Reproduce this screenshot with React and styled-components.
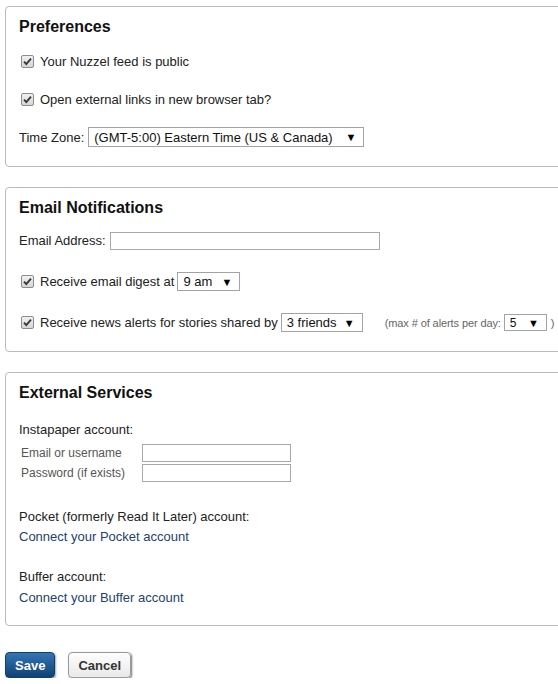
import React from "react";
import styled, { createGlobalStyle } from "styled-components";

const GlobalStyle = createGlobalStyle`
  html, body {
    margin: 0;
    padding: 0;
    overflow: hidden;
    background: #fff;
  }
  body {
    font-family: "Liberation Sans", Arial, sans-serif;
    font-size: 13px;
    color: #222;
  }
`;

const Page = styled.div`
  padding: 6px 0 0 5px;
  width: 570px;
`;

const Panel = styled.section`
  border: 1px solid #bbb;
  border-radius: 4px;
  padding: 10px 13px ${(p) => p.$bottom || 10}px;
  margin-bottom: 20px;
`;

const Heading = styled.h2`
  margin: 0 0 ${(p) => p.$gap || 0}px;
  font-size: 16px;
  line-height: 20px;
  font-weight: bold;
  color: #111;
`;

const Row = styled.div`
  display: flex;
  align-items: center;
  height: ${(p) => p.$h || 38}px;
  margin-top: ${(p) => p.$top || 0}px;
  white-space: nowrap;
`;

const Line = styled.div`
  line-height: 20px;
  margin-top: ${(p) => p.$top || 0}px;
`;

const Link = styled.a`
  display: block;
  line-height: 20px;
  margin-top: ${(p) => p.$top || 0}px;
  color: #24426c;
  text-decoration: none;
  cursor: pointer;
`;

const Box = styled.span`
  display: inline-flex;
  width: 13px;
  height: 13px;
  margin: 0 6px 0 2px;
  flex: none;
`;

const Label = styled.label`
  margin-right: ${(p) => p.$gap ?? 4}px;
`;

const SmallLabel = styled.span`
  display: inline-block;
  width: 121px;
  padding-left: 2px;
  font-size: 12px;
  color: #555;
`;

const Hint = styled.span`
  font-size: 11px;
  letter-spacing: -0.1px;
  color: #666;
  margin: 0 ${(p) => p.$right || 0}px 0 ${(p) => p.$left || 0}px;
`;

const TextInput = styled.input`
  box-sizing: border-box;
  width: ${(p) => p.$w}px;
  height: 18px;
  border: 1px solid #a9a9a9;
  padding: 0 3px;
  font: inherit;
  outline: none;
`;

const SelectBox = styled.span`
  position: relative;
  display: inline-flex;
  align-items: center;
  box-sizing: border-box;
  width: ${(p) => p.$w}px;
  height: ${(p) => p.$h || 20}px;
  border: 1px solid #a3a3a3;
  background: #fff;
  padding-left: 5px;
  font-size: ${(p) => p.$size || 13}px;
  color: #111;
`;

const Arrow = styled.span`
  position: absolute;
  right: 7px;
  top: 50%;
  transform: translateY(-50%);
  font-size: 11px;
  line-height: 1;
  color: #000;
`;

const Buttons = styled.div`
  display: flex;
  gap: 13px;
  padding-top: 6px;
`;

const Button = styled.button`
  box-sizing: border-box;
  height: 26px;
  padding: 0 9px;
  border-radius: 4px;
  font-family: "Liberation Sans", Arial, sans-serif;
  font-size: 13px;
  font-weight: bold;
  cursor: pointer;
  color: ${(p) => (p.$primary ? "#fff" : "#333")};
  border: 1px solid ${(p) => (p.$primary ? "#123e6b" : "#9a9a9a")};
  background: ${(p) =>
    p.$primary
      ? "linear-gradient(#3474b3, #0f4275)"
      : "linear-gradient(#fdfdfd, #e9e9e9)"};
  box-shadow: ${(p) =>
    p.$primary ? "1px 1px 2px rgba(0,0,0,0.35)" : "1px 1px 2px rgba(0,0,0,0.55)"};
`;

function Check() {
  return (
    <Box>
      <svg width="13" height="13" viewBox="0 0 13 13">
        <defs>
          <linearGradient id="cb" x1="0" y1="0" x2="0" y2="1">
            <stop offset="0" stopColor="#f2f2f2" />
            <stop offset="1" stopColor="#d4d4d4" />
          </linearGradient>
        </defs>
        <rect x="0.5" y="0.5" width="12" height="12" rx="1.5" fill="url(#cb)" stroke="#8d8d8d" />
        <path d="M3 6.6 L5.3 9 L10 3.6" fill="none" stroke="#3a3a3a" strokeWidth="1.9" />
      </svg>
    </Box>
  );
}

function Select({ value, w, h, size }) {
  return (
    <SelectBox $w={w} $h={h} $size={size}>
      {value}
      <Arrow>▼</Arrow>
    </SelectBox>
  );
}

export default function App() {
  return (
    <>
      <GlobalStyle />
      <Page>
        <Panel>
          <Heading $gap={5}>Preferences</Heading>
          <Row>
            <Check />
            Your Nuzzel feed is public
          </Row>
          <Row>
            <Check />
            Open external links in new browser tab?
          </Row>
          <Row>
            <Label>Time Zone:</Label>
            <Select value="(GMT-5:00) Eastern Time (US & Canada)" w={276} />
          </Row>
        </Panel>

        <Panel $bottom={8}>
          <Heading $gap={2}>Email Notifications</Heading>
          <Row $h={41}>
            <Label>Email Address:</Label>
            <TextInput $w={270} />
          </Row>
          <Row $h={41}>
            <Check />
            <Label $gap={3}>Receive email digest at</Label>
            <Select value="9 am" w={63} h={19} />
          </Row>
          <Row $h={41}>
            <Check />
            <Label $gap={3}>Receive news alerts for stories shared by</Label>
            <Select value="3 friends" w={82} h={19} />
            <Hint $left={22} $right={3}>(max # of alerts per day:</Hint>
            <Select value="5" w={43} h={17} size={12} />
            <Hint $left={4}>)</Hint>
          </Row>
        </Panel>

        <Panel $bottom={17}>
          <Heading>External Services</Heading>
          <Line $top={17}>Instapaper account:</Line>
          <Row $h={20} $top={3}>
            <SmallLabel>Email or username</SmallLabel>
            <TextInput $w={149} />
          </Row>
          <Row $h={20}>
            <SmallLabel>Password (if exists)</SmallLabel>
            <TextInput $w={149} type="password" />
          </Row>
          <Line $top={24}>Pocket (formerly Read It Later) account:</Line>
          <Link>Connect your Pocket account</Link>
          <Line $top={20}>Buffer account:</Line>
          <Link $top={1}>Connect your Buffer account</Link>
        </Panel>

        <Buttons>
          <Button $primary>Save</Button>
          <Button>Cancel</Button>
        </Buttons>
      </Page>
    </>
  );
}
